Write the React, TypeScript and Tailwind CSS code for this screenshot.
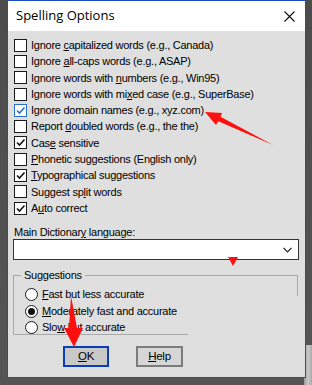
import React from "react";

type Option = {
    pre: string;
    mnemonic?: string;
    post?: string;
    checked?: boolean;
    focused?: boolean;
};

const options: Option[] = [
    { pre: "Ignore ", mnemonic: "c", post: "apitalized words (e.g., Canada)" },
    { pre: "Ignore ", mnemonic: "a", post: "ll-caps words (e.g., ASAP)" },
    { pre: "Ignore words with ", mnemonic: "n", post: "umbers (e.g., Win95)" },
    { pre: "Ignore words with mi", mnemonic: "x", post: "ed case (e.g., SuperBase)" },
    { pre: "Ignore domain names (e.g., xyz.com)", checked: true, focused: true },
    { pre: "Report ", mnemonic: "d", post: "oubled words (e.g., the the)" },
    { pre: "Cas", mnemonic: "e", post: " sensitive", checked: true },
    { pre: "", mnemonic: "P", post: "honetic suggestions (English only)" },
    { pre: "", mnemonic: "T", post: "ypographical suggestions", checked: true },
    { pre: "Suggest sp", mnemonic: "l", post: "it words" },
    { pre: "A", mnemonic: "u", post: "to correct", checked: true },
];

const radios: Option[] = [
    { pre: "", mnemonic: "F", post: "ast but less accurate" },
    { pre: "", mnemonic: "M", post: "oderately fast and accurate", checked: true },
    { pre: "Slo", mnemonic: "w", post: " but accurate" },
];

function Label({ pre, mnemonic, post }: Option) {
    return (
        <span className="whitespace-nowrap">
            {pre}
            {mnemonic ? <u className="underline-offset-[1px]">{mnemonic}</u> : null}
            {post}
        </span>
    );
}

function Checkbox({ checked, focused }: { checked?: boolean; focused?: boolean }) {
    return (
        <span
            className={`flex h-[13px] w-[13px] shrink-0 items-center justify-center border bg-white ${
                focused ? "border-[#2a6fd0]" : "border-[#1a1a1a]"
            }`}
        >
            {checked ? (
                <svg width="11" height="11" viewBox="0 0 11 11">
                    <path
                        d="M2 5.5 L4.5 8 L9.5 2.5"
                        fill="none"
                        stroke={focused ? "#2a6fd0" : "#111"}
                        strokeWidth="1.6"
                    />
                </svg>
            ) : null}
        </span>
    );
}

function Radio({ checked }: { checked?: boolean }) {
    return (
        <span className="flex h-[13px] w-[13px] shrink-0 items-center justify-center rounded-full border border-[#1a1a1a] bg-white">
            {checked ? <span className="h-[7px] w-[7px] rounded-full bg-[#111]" /> : null}
        </span>
    );
}

export default function App() {
    return (
        <div className="relative h-[385px] w-[312px] overflow-hidden bg-[linear-gradient(to_bottom,#4c4c4c,#555)]">
            <div className="absolute bottom-0 right-0 h-[40px] w-[8px] bg-[linear-gradient(to_right,#9a9a9a,#c8c8c8,#aaa)]" />
            <div className="relative ml-[7px] flex h-[378px] w-[299px] flex-col border border-[#1c4cc0] bg-[#dfdfdf] font-['Liberation_Sans',Arial,sans-serif] text-[11px] tracking-[-0.25px] text-black">
                <div className="flex h-[30px] shrink-0 items-center justify-between bg-white pl-[8px] pr-[10px]">
                    <span className="font-['Open_Sans',sans-serif] text-[13px] tracking-normal text-black">
                        Spelling Options
                    </span>
                    <svg width="11" height="11" viewBox="0 0 11 11">
                        <path d="M0.5 0.5 L10.5 10.5 M10.5 0.5 L0.5 10.5" stroke="#111" strokeWidth="1.1" />
                    </svg>
                </div>

                <div className="flex flex-col px-[5px] pt-[6px]">
                    {options.map((o, i) => (
                        <div key={i} className="flex h-[16.3px] items-center gap-[4px] pl-[1px]">
                            <Checkbox checked={o.checked} focused={o.focused} />
                            <Label {...o} />
                        </div>
                    ))}

                    <div className="mt-[10px] h-[12px] pl-[1px] leading-[12px]">
                        <Label pre="Main Dictionar" mnemonic="y" post=" language:" />
                    </div>
                    <div className="mt-[1px] flex h-[21px] w-[286px] items-center justify-end border border-[#333] bg-white pr-[6px]">
                        <svg width="9" height="6" viewBox="0 0 9 6">
                            <path d="M0.5 0.8 L4.5 4.8 L8.5 0.8" fill="none" stroke="#222" strokeWidth="1.2" />
                        </svg>
                    </div>

                    <div className="relative mt-[15px] h-[60px] w-[285px] border-l border-t border-[#a8a8a8] pl-[11px] pt-[10px]">
                        <span className="absolute left-[7px] top-[-7px] bg-[#dfdfdf] px-[3px] leading-[13px]">
                            Suggestions
                        </span>
                        <span className="absolute right-0 top-0 h-[20px] w-px bg-[#a8a8a8]" />
                        <span className="absolute bottom-0 left-0 h-px w-[174px] bg-[#a8a8a8]" />
                        {radios.map((r, i) => (
                            <div key={i} className="flex h-[16.5px] items-center gap-[4px]">
                                <Radio checked={r.checked} />
                                <Label {...r} />
                            </div>
                        ))}
                    </div>

                    <div className="mt-[11px] flex gap-[27px] pl-[50px]">
                        <button className="flex h-[21px] w-[46px] items-center justify-center border-2 border-[#0a3db8] bg-[#c9c9c9] text-[11.5px]">
                            <Label pre="" mnemonic="O" post="K" />
                        </button>
                        <button className="flex h-[21px] w-[47px] items-center justify-center border-2 border-[#7c7c7c] bg-[#d6d6d6] text-[11.5px]">
                            <Label pre="" mnemonic="H" post="elp" />
                        </button>
                    </div>
                </div>
            </div>

            {/* red annotation arrows */}
            <svg className="pointer-events-none absolute left-0 top-0" width="312" height="385">
                <polygon
                    points="205,112 222,113 220.5,116.8 273,145 218.3,121.3 216,125"
                    fill="#ff1010"
                />
                <polygon points="228,257 238,257 233,266" fill="#ff1010" />
                <polygon points="71,296 77,328 83,328 74,347 64,328 69,328" fill="#ff1010" />
            </svg>
        </div>
    );
}
